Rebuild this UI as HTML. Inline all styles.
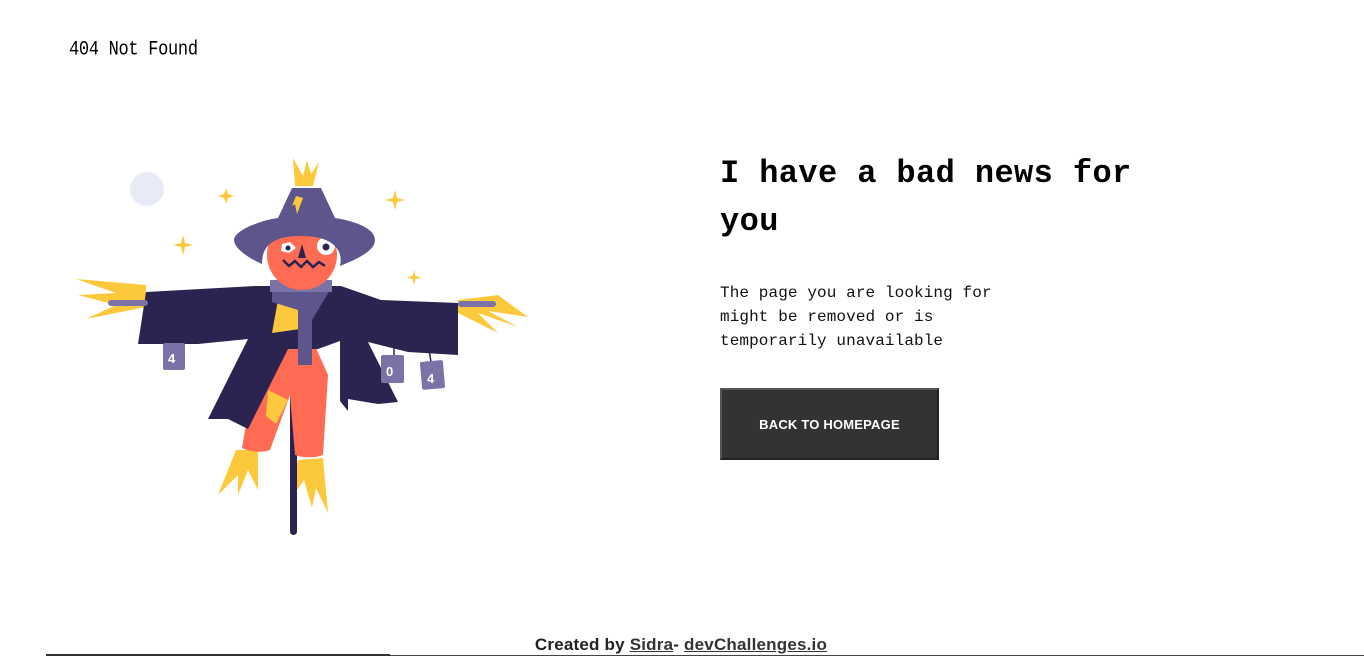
<!DOCTYPE html>
<html><head><meta charset="utf-8"><style>
html,body{margin:0;padding:0;background:#fff;width:1364px;height:656px;overflow:hidden;position:relative}
.hdr{position:absolute;left:69px;top:39px;font:17px "Liberation Mono",monospace;color:#000;transform:scaleY(1.2);transform-origin:left top;letter-spacing:-0.3px}
h1{position:absolute;left:720px;top:150px;margin:0;font:bold 32px/48px "Liberation Mono",monospace;letter-spacing:0.4px;width:440px;color:#000}
p{position:absolute;left:720px;top:281px;margin:0;font:16px/24px "Liberation Mono",monospace;width:300px;color:#111;letter-spacing:0.1px}
.btn{position:absolute;left:720px;top:388px;width:215px;height:68px;background:#333;border:2px solid #555;border-right-color:#222;border-bottom-color:#222;color:#fff;font:bold 13px "Liberation Sans",sans-serif;display:flex;align-items:center;justify-content:center;letter-spacing:0.2px}
.ftr{position:absolute;left:0;width:1362px;top:635px;text-align:center;font:bold 17px "Liberation Sans",sans-serif;color:#222;letter-spacing:0.2px}
.ftr u{color:#333}
.line{position:absolute;left:46px;top:654px;width:344px;height:2px;background:#333}
.line2{position:absolute;left:390px;top:655px;width:974px;height:1px;background:#444}
</style></head><body>
<div class="hdr">404 Not Found</div>
<svg style="position:absolute;left:0;top:0" width="600" height="600" viewBox="0 0 600 600">
<circle cx="147" cy="189" r="17" fill="#e8ebf5"/>
<g fill="#fdc93c">
<path d="M226 188l2 6 6 2-6 2-2 6-2-6-6-2 6-2z"/>
<path d="M395 190l2 8 8 2-8 2-2 8-2-8-8-2 8-2z"/>
<path d="M183 235l2 8 8 2-8 2-2 8-2-8-8-2 8-2z"/>
<path d="M414 270l1.5 6 6 1.5-6 1.5-1.5 6-1.5-6-6-1.5 6-1.5z"/>
<path d="M293 158l10 18 4-16 4 14 8-12-6 24h-18z"/>
<path d="M146 285l-70 -6 40 14-38 2 38 10-30 14 60-12z"/>
<path d="M458 300l40-5 30 22-40-6 30 16-40-14 20 20-40-20z"/>
<path d="M236 450l-18 45 20-20 0 20 10-25 10 20 0-40z"/>
<path d="M298 460l-8 40 14-20 8 28 4-20 12 25-5-55z"/>
</g>
<rect x="290" y="380" width="7" height="155" rx="3.5" fill="#2a2350"/>
<path d="M268 330h40l20 45-5 80c-8 3-20 3-28 0l-5-60-20 55c-8 3-20 2-28-2l12-70z" fill="#ff6b53"/>
<path d="M268 390l20 10-12 24-10-8z" fill="#fdc93c"/>
<path d="M146 292l110-6 15 0h70l40 14 77 3v52l-50-3-40-10 30 60-20 2-30-5v12l-8-10v-60l-22 8-30 0-40 80-20-10h-20l40-80-50 5h-60z" fill="#2c2450"/>
<path d="M278 300h34l-5 28-35 5z" fill="#fdc93c"/>
<path d="M272 290h58l-18 30 0 45h-14l0-55-26-8z" fill="#5f558d"/>
<path d="M270 280h62v12h-62z" fill="#7b72a8"/>
<rect x="108" y="300" width="40" height="6" rx="3" fill="#7b72a8"/>
<rect x="458" y="301" width="38" height="6" rx="3" fill="#7b72a8"/>
<circle cx="302" cy="255" r="35" fill="#ff6b53"/>
<path d="M282 244l8-2 6 6-7 5-8-2z" fill="#fff"/>
<circle cx="326" cy="246" r="9" fill="#fff"/>
<circle cx="326" cy="247" r="3.5" fill="#2c2450"/>
<circle cx="288" cy="248" r="2.5" fill="#2c2450"/>
<path d="M302 244l-4 14h8z" fill="#2c2450"/>
<path d="M283 260l6 6 6-5 6 6 6-6 6 6 6-5 6 4" fill="none" stroke="#2c2450" stroke-width="2.5"/>
<path d="M292 188l29 0 14 30c25 4 40 12 40 22 0 10-15 18-35 26 4-18-10-30-38-30-30 0-40 10-40 28-14-6-28-16-28-24 0-10 28-20 44-22z" fill="#5f558d"/>
<path d="M296 196l7 2-6 16-2-10-3 2z" fill="#fdc93c"/>
<g stroke="#2c2450" stroke-width="1.5"><line x1="178" y1="322" x2="176" y2="345"/><line x1="394" y1="337" x2="394" y2="356"/><line x1="427" y1="337" x2="431" y2="362"/></g>
<g fill="#7b72a8"><rect x="163" y="343" width="22" height="27" rx="2"/><rect x="381" y="355" width="23" height="28" rx="2"/><rect x="421" y="361" width="23" height="28" rx="2" transform="rotate(-5 432 375)"/></g>
<g fill="#fff" font-family="Liberation Sans,sans-serif" font-weight="bold" font-size="13"><text x="168" y="363">4</text><text x="386" y="376">0</text><text x="427" y="383">4</text></g>
</svg>
<h1>I have a bad news for you</h1>
<p>The page you are looking for might be removed or is temporarily unavailable</p>
<div class="btn">BACK TO HOMEPAGE</div>
<div class="ftr">Created by <u>Sidra</u>- <u>devChallenges.io</u></div>
<div class="line"></div><div class="line2"></div>
</body></html>
